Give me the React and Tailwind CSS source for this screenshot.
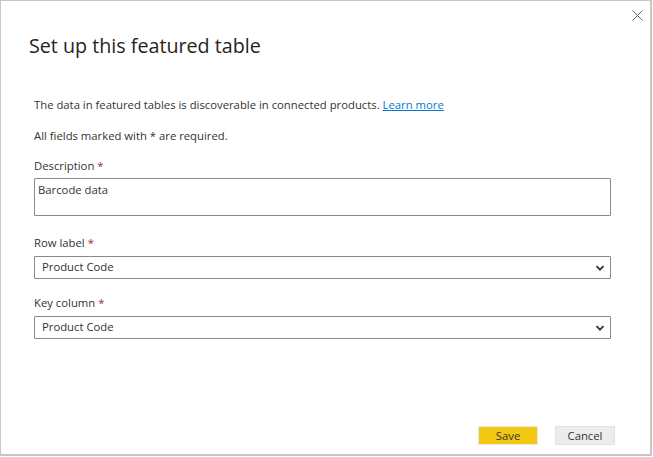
import React from "react";

const font = { fontFamily: '"Open Sans", "Noto Sans", sans-serif' };

function Chevron() {
  return (
    <svg width="12" height="12" viewBox="0 0 12 12" className="shrink-0">
      <path d="M2.5 4.2 L6 7.7 L9.5 4.2" fill="none" stroke="#333" strokeWidth="1.8" />
    </svg>
  );
}

function Label({ children }) {
  return (
    <div className="text-[11.3px] leading-[16px] text-[#333] h-[16px]">
      {children} <span className="text-[#a4262c]">*</span>
    </div>
  );
}

function Select({ value }) {
  return (
    <div className="mt-[5px] w-[577px] h-[23px] border border-[#8a8a8a] rounded-[1px] flex items-center justify-between pl-[7px] pr-[4px] text-[11.3px] text-[#333]">
      <span>{value}</span>
      <Chevron />
    </div>
  );
}

export default function App() {
  return (
    <div className="w-[653px] h-[457px] bg-white" style={font}>
      <div className="relative w-[652px] h-[456px] border-l border-t border-r-2 border-b-2 border-[#c6c6c6] flex flex-col">
        <button className="absolute right-[7px] top-[8px] w-[12px] h-[12px] flex items-center justify-center">
          <svg width="11" height="11" viewBox="0 0 11 11">
            <path d="M0.5 0.5 L10.5 10.5 M10.5 0.5 L0.5 10.5" stroke="#666" strokeWidth="1" fill="none" />
          </svg>
        </button>
        <div className="pl-[28px] pt-[31px] text-[19.7px] leading-[28px] text-[#252423]">
          Set up this featured table
        </div>
        <div className="pl-[33px] pt-[37px] text-[11.3px] leading-[16px] text-[#333]">
          The data in featured tables is discoverable in connected products.{" "}
          <span className="text-[#0078d4] underline">Learn more</span>
        </div>
        <div className="pl-[33px] pt-[15px] text-[11.3px] leading-[16px] text-[#333]">
          All fields marked with * are required.
        </div>
        <div className="pl-[33px] pt-[14px]">
          <Label>Description</Label>
          <div className="mt-[4px] w-[577px] h-[38px] border border-[#8a8a8a] rounded-[1px] pl-[3px] pt-[3px] text-[11.3px] leading-[16px] text-[#333]">
            Barcode data
          </div>
        </div>
        <div className="pl-[33px] pt-[19px]">
          <Label>Row label</Label>
          <Select value="Product Code" />
        </div>
        <div className="pl-[33px] pt-[16px]">
          <Label>Key column</Label>
          <Select value="Product Code" />
        </div>
        <div className="mt-auto mb-[9px] flex justify-end gap-[17px] pr-[35px]">
          <button className="w-[60px] h-[19px] bg-[#f2c811] border border-[#e8e8e8] text-[11.3px] leading-[16px] text-[#333]">
            Save
          </button>
          <button className="w-[60px] h-[19px] bg-[#ececec] border border-[#e3e3e3] text-[11.3px] leading-[16px] text-[#333]">
            Cancel
          </button>
        </div>
      </div>
    </div>
  );
}
